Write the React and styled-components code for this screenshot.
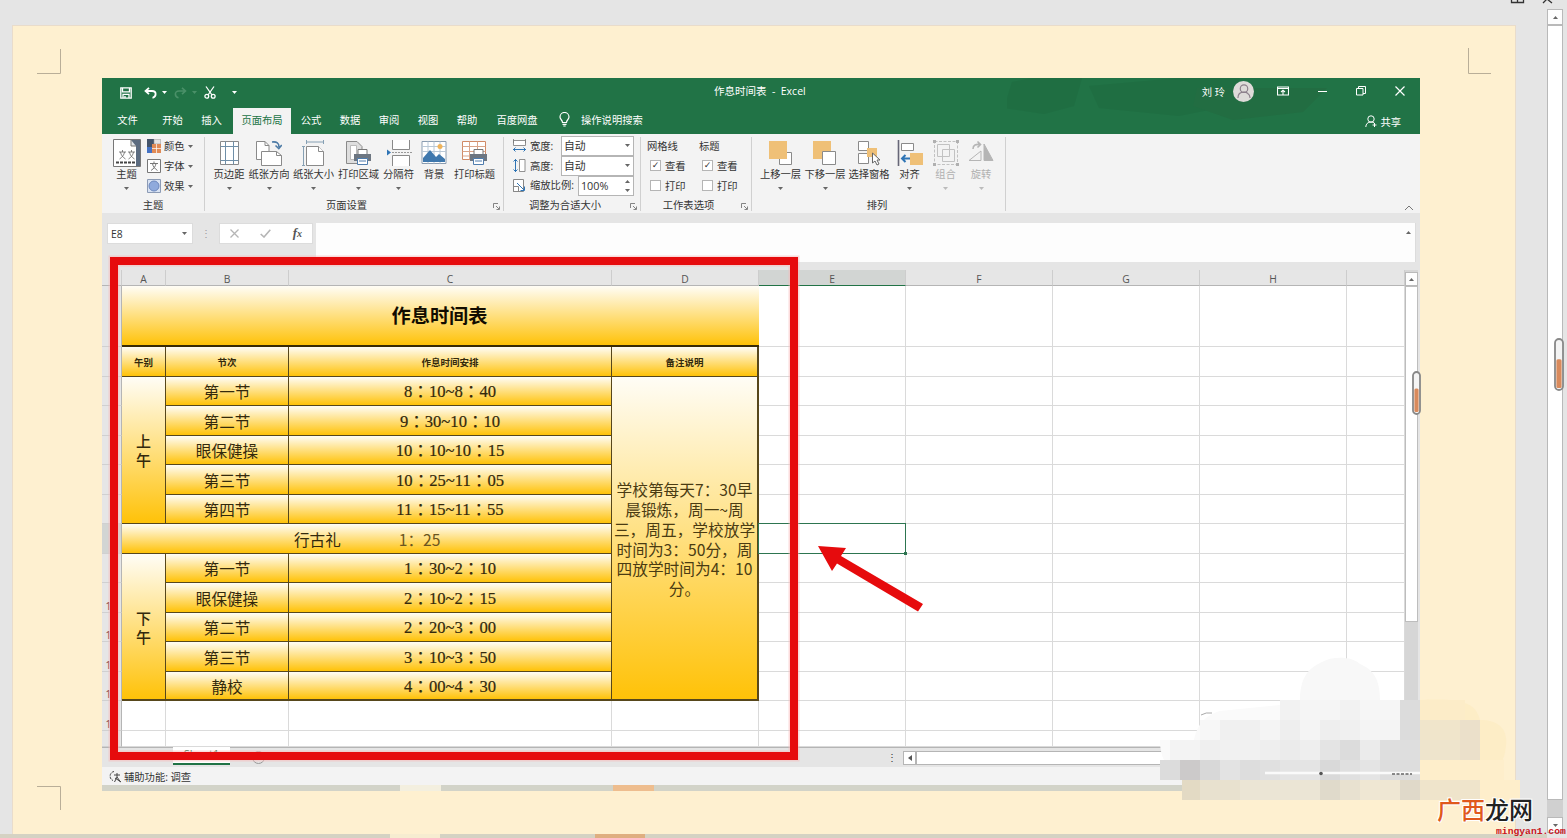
import React from 'react';
import styled, { createGlobalStyle, css } from 'styled-components';

const ui = "'Open Sans', 'Noto Sans CJK SC', sans-serif";
const cjk = "'Noto Sans CJK SC', sans-serif";
const green = '#217346';

const GlobalStyle = createGlobalStyle`
  * { box-sizing: border-box; }
  body { margin: 0; background: #e5e5e5; font-family: ${ui}; overflow: hidden; }
  svg { display: block; flex-shrink: 0; }
`;

/* ---------- icons ---------- */

const Caret = ({ color = '#666', up }) => (
  <svg width="5" height="3" viewBox="0 0 5 3">
    <path d={up ? 'M0 3h5L2.5 0z' : 'M0 0h5L2.5 3z'} fill={color} />
  </svg>
);

const Launcher = () => (
  <svg width="7" height="7" viewBox="0 0 7 7" fill="none" stroke="#777">
    <path d="M.5 5V.5H5M3 3l3 3M6.5 3.5v3h-3" strokeWidth=".9" />
  </svg>
);

const SaveIcon = () => (
  <svg width="12" height="12" viewBox="0 0 12 12" fill="none" stroke="#fff" strokeWidth="1.3">
    <path d="M.8.8h10.4v10.4H.8zM2.5 1v3.8h7V1M3 11V7.3h6V11M5 9v2" />
  </svg>
);

const UndoIcon = () => (
  <svg width="13" height="12" viewBox="0 0 13 12" fill="none" stroke="#fff" strokeWidth="1.8">
    <path d="M5 .8 1.5 4 5 7.2M1.8 4H8c5 0 4.5 6 .5 6.8" />
  </svg>
);

const RedoIcon = () => (
  <svg width="13" height="12" viewBox="0 0 13 12" fill="none" stroke="#4a9068" strokeWidth="1.6">
    <path d="M8 .8 11.5 4 8 7.2M11.2 4H5C0 4 .5 10 4.5 10.8" />
  </svg>
);

const CutIcon = () => (
  <svg width="12" height="13" viewBox="0 0 12 13" fill="none" stroke="#fff" strokeWidth="1.3">
    <path d="M2 .5 8 9M10 .5 4 9" />
    <circle cx="2.8" cy="10.2" r="1.9" />
    <circle cx="9.2" cy="10.2" r="1.9" />
  </svg>
);

const BulbIcon = () => (
  <svg width="11" height="15" viewBox="0 0 11 15" fill="none" stroke="#fff" strokeWidth="1.2">
    <path d="M3.5 10.5C3.5 8 1 7.500 1 5a4.500 4.500 0 0 1 9 0c0 2.500-2.500 3-2.500 5.500zM3.500 12.300h4M4.300 14h2.400" />
  </svg>
);

const PersonIcon = ({ size = 12, color = '#fff', plus }) => (
  <svg width={size} height={size} viewBox="0 0 12 12" fill="none" stroke={color}>
    <circle cx="6" cy="4" r="3.200" />
    <path d="M.8 12c0-3 2-5 5.200-5 1.500 0 2.500.4 3.300 1.100" />
    {plus ? <path d="M9.500 8v4M7.500 10h4" /> : <path d="M9 8c1.500 1 2.200 2.300 2.200 4" />}
  </svg>
);

const RibbonOptionsIcon = () => (
  <svg width="12" height="10" viewBox="0 0 12 10" fill="none" stroke="#fff" strokeWidth="1.1">
    <path d="M.5 1h11v8H.5zM.5 2.500h11M6 8.500V4.500M4 6l2-1.800L8 6" />
  </svg>
);

const RestoreIcon = () => (
  <svg width="10" height="10" viewBox="0 0 10 10" fill="none" stroke="#fff">
    <path d="M.5 2.500h6.500v6.500H.5zM2.500 2.500v-2h7v7H7" />
  </svg>
);

const CloseIcon = () => (
  <svg width="10" height="10" viewBox="0 0 10 10" stroke="#fff" strokeWidth="1.200">
    <path d="M.5.5l9 9M9.500.5l-9 9" />
  </svg>
);

const ThemeIcon = () => (
  <svg width="28" height="28" viewBox="0 0 28 28" fill="none">
    <path d="M.5.500h27v27H.5z" fill="#fff" stroke="#777" />
    <path d="M23 1h4v26h-4V7z" fill="#5b6b80" />
    <path d="M18 1v6h5l4-6z" fill="#5b6b80" />
    <path d="M18 1v6h5" fill="#dfe3e8" stroke="#777" />
    <g stroke="#666" strokeWidth=".8">
      <path d="M6 13h7M9.500 11v2M6.500 20c3-2 4.500-4 5-7M12.500 20c-3-2-4.500-4-5-7" />
      <path d="M15 13h7M18.500 11v2M15.500 20c3-2 4.500-4 5-7M21.500 20c-3-2-4.500-4-5-7" />
    </g>
    <path d="M3 23.500h19" stroke="#444" strokeWidth="2" strokeDasharray="3 1" />
  </svg>
);

const ColorsIcon = () => (
  <svg width="14" height="14" viewBox="0 0 14 14">
    <path fill="#44546a" d="M0 0h7v8H0z" />
    <path fill="#e4e4e4" stroke="#999" strokeWidth=".6" d="M7 .3h6.700V5H7z" />
    <path fill="#4472c4" d="M0 8h5v6H0z" />
    <path fill="#e08a55" d="M5 5h9v9H5z" />
    <path stroke="#fff" strokeWidth=".7" d="M9.500 5v9M5 9.500h9" />
  </svg>
);

const FontsIcon = () => (
  <svg width="14" height="14" viewBox="0 0 14 14" fill="none" stroke="#777">
    <path d="M.5.500h13v13H.5z" fill="#fff" />
    <path d="M3 4.500h8M7 2.500v2M4 11.500c3-2 4.500-4 5-7M10.500 11.500c-3-2-4.500-4-5-7" />
  </svg>
);

const EffectsIcon = () => (
  <svg width="14" height="14" viewBox="0 0 14 14">
    <path d="M.5.500h13v13H.5z" fill="#d9e3f3" stroke="#8c9bb5" />
    <circle cx="7" cy="7" r="5" fill="#8faadc" stroke="#6d88bd" />
  </svg>
);

const line = { fill: '#fff', stroke: '#8a8a8a' };

const MarginsIcon = () => (
  <svg width="24" height="26" viewBox="0 0 24 26" {...line}>
    <path d="M3.500 1.500h18v23h-18z" />
    <path d="M8.500 1.500v23M16.500 1.500v23M3.500 6.500h18M3.500 20.500h18" stroke="#6f8fa8" fill="none" />
  </svg>
);

const OrientationIcon = () => (
  <svg width="26" height="26" viewBox="0 0 26 26" {...line}>
    <path d="M.5 1.500H9l4 4v14H.5z" />
    <path d="M5.500 11.500h15l5 4v10h-20z" />
    <path d="M20.500 11.500v4h5M9 1.500v4h4" fill="none" />
    <path d="M16 2c5-.5 7 1 7 5M19.500 5.500l3.300 3 3-3.500" fill="none" stroke="#4c7aa5" strokeWidth="1.600" />
  </svg>
);

const SizeIcon = () => (
  <svg width="24" height="26" viewBox="0 0 24 26" {...line}>
    <path d="M4.500 6.500h12l5 5v14h-17z" />
    <path d="M16.500 6.500v5h5" />
    <path d="M4.500 0v4M21.500 0v4M5 2h16M1.500 6.500v19M0 6.500h3M0 25.500h3" stroke="#86a0b4" fill="none" />
  </svg>
);

const Printer = ({ x, y }) => (
  <g transform={`translate(${x} ${y})`}>
    <path d="M4 .500h9v5H4z" fill="#fff" stroke="#777" />
    <path d="M0 5h17v7H0z" fill="#6d7681" />
    <path d="M3.500 9.500h10v6h-10z" fill="#fff" stroke="#4f7dae" />
    <path d="M5 12h7" stroke="#4f7dae" />
  </g>
);

const PrintAreaIcon = () => (
  <svg width="26" height="26" viewBox="0 0 26 26">
    <path d="M.5 1.500H11l5 5v17H.5z" fill="#dedede" stroke="#8a8a8a" />
    <path d="M4.500 5.500h6v14h-6z" fill="#fff" stroke="#bbb" />
    <Printer x={8} y={9} />
  </svg>
);

const BreaksIcon = () => (
  <svg width="26" height="26" viewBox="0 0 26 26" {...line}>
    <path d="M6.500 0v9.500h17V0M6.500 26V15.500h17V26" />
    <path d="M6 12.500h20" stroke="#999" strokeDasharray="2 1" />
    <path d="M1 9.500l4 3-4 3z" fill="#2e74b5" stroke="none" />
  </svg>
);

const BackgroundIcon = () => (
  <svg width="26" height="26" viewBox="0 0 26 26">
    <path d="M1 1.500h24v22H1z" fill="#fff" stroke="#8a9cb0" />
    <path d="M1 6.500h24M1 11.500h24M7 1.500v22M13 1.500v22M19 1.500v22" stroke="#b9c8d6" />
    <circle cx="19" cy="6.500" r="2.500" fill="#f0b45a" />
    <path d="M2 22v-4l7-8 6 7 3-3 6 5v3z" fill="#3f78ad" />
  </svg>
);

const PrintTitlesIcon = () => (
  <svg width="26" height="26" viewBox="0 0 26 26">
    <path d="M.5 1.500h23v18H.5z" fill="#fff" stroke="#d08a66" />
    <path d="M.5 6.500h23M.5 11.500h23M.5 16h23M7.500 1.500v18M15.500 1.500v18" stroke="#d9a58a" />
    <Printer x={8} y={9} />
  </svg>
);

const ForwardIcon = () => (
  <svg width="24" height="26" viewBox="0 0 24 26">
    <path d="M10.500 12.500h12v12h-12z" {...line} />
    <path d="M0 1h18v18H0z" fill="#efc077" />
  </svg>
);

const BackwardIcon = () => (
  <svg width="24" height="26" viewBox="0 0 24 26">
    <path d="M0 1h18v18H0z" fill="#efc077" />
    <path d="M9.500 11.500h13v13h-13z" {...line} />
  </svg>
);

const SelectionIcon = () => (
  <svg width="24" height="26" viewBox="0 0 24 26" {...line}>
    <path d="M1.500 1.500h10v9h-10zM1.500 13.500h10v10h-10z" />
    <path d="M10 8h10v9H10z" fill="#efc077" stroke="none" />
    <path d="M15.500 13v10l2.500-2 2 4 2-1-2-4h3z" stroke="#666" />
  </svg>
);

const AlignIcon = () => (
  <svg width="26" height="26" viewBox="0 0 26 26">
    <path d="M1.500 0v26" stroke="#667" strokeWidth="1.600" />
    <path d="M4.500 3.500h12v7h-12z" {...line} />
    <path d="M13 13h13v12H13z" fill="#efc077" />
    <path d="M13 18.500H5M8.500 15 5 18.500 8.500 22" fill="none" stroke="#2e74b5" strokeWidth="2" />
  </svg>
);

const GroupIcon = () => (
  <svg width="26" height="26" viewBox="0 0 26 26" fill="none" stroke="#c2c2c2">
    <path d="M1.500 1.500h23v23h-23z" strokeDasharray="3 1.500" />
    <path d="M4.500 4.500h12v12h-12zM9.500 9.500h12v12h-12z" />
    <path d="M0 0h3v3H0zM23 0h3v3h-3zM0 23h3v3H0zM23 23h3v3h-3z" fill="#b0b0b0" stroke="none" />
  </svg>
);

const RotateIcon = () => (
  <svg width="26" height="26" viewBox="0 0 26 26" fill="none" stroke="#b5b5b5">
    <path d="M1 20.500h12V11z" />
    <path d="M16 20.500V4l9 16.500z" fill="#b5b5b5" />
    <path d="M5 9c0-4 3-5 7-4.500M9.500 1.500l3 3-3 3" strokeWidth="1.600" />
  </svg>
);

const WidthIcon = () => (
  <svg width="13" height="13" viewBox="0 0 13 13" fill="none" stroke="#777">
    <path d="M.5 0v4M12.500 0v4M.5 6.500h12v-5H.5z" strokeWidth=".8" fill="#fff" />
    <path d="M0 10.500h13M2.500 8.500l-2 2 2 2M10.500 8.500l2 2-2 2" stroke="#2e74b5" />
  </svg>
);

const HeightIcon = () => (
  <svg width="13" height="13" viewBox="0 0 13 13" fill="none" stroke="#777">
    <path d="M6.500.500h5.500v12H6.500z" strokeWidth=".8" fill="#fff" />
    <path d="M2.500 0v13M.5 2.500l2-2 2 2M.5 10.500l2 2 2-2" stroke="#2e74b5" />
  </svg>
);

const ScaleIcon = () => (
  <svg width="13" height="13" viewBox="0 0 13 13" fill="none" stroke="#888">
    <path d="M.5.500h10v12H.5z" fill="#fff" />
    <path d="M.5 7.500h5v5h-5z" />
    <path d="M4 4l7 7M11.500 7.500v4h-4" stroke="#2e74b5" />
  </svg>
);

const AccessIcon = () => (
  <svg width="13" height="13" viewBox="0 0 13 13" fill="none" stroke="#444">
    <path d="M5 1.500C0 2.500 0 9 4 10.500" strokeDasharray="2.500 1" />
    <path d="M5 5h6M8 3v4M8 7l-2.500 5M8 7l3.500 5M6 8l6 4" />
  </svg>
);

const Thermometer = ({ w, h }) => (
  <svg width={w} height={h} viewBox={`0 0 ${w} ${h}`}>
    <rect x="1" y="1" width={w - 2} height={h - 2} rx={w / 2 - 1} fill="#f4f4f4" stroke="#888" strokeWidth="1.800" />
    <rect x="2.400" y={h * 0.4} width={w - 4.800} height={h * 0.6 - 3} rx="1.500" fill="#d98a5c" />
  </svg>
);

/* ---------- content ---------- */

const tabs = [
  { name: '文件', w: 43 },
  { name: '开始', w: 47 },
  { name: '插入', w: 31 },
  { name: '页面布局', w: 58, active: true },
  { name: '公式', w: 40 },
  { name: '数据', w: 38 },
  { name: '审阅', w: 40 },
  { name: '视图', w: 38 },
  { name: '帮助', w: 40 },
  { name: '百度网盘', w: 60 },
];

const pageSetup = [
  { label: '页边距', w: 36, icon: MarginsIcon, menu: true },
  { label: '纸张方向', w: 44, icon: OrientationIcon, menu: true },
  { label: '纸张大小', w: 45, icon: SizeIcon, menu: true },
  { label: '打印区域', w: 45, icon: PrintAreaIcon, menu: true },
  { label: '分隔符', w: 35, icon: BreaksIcon, menu: true },
  { label: '背景', w: 36, icon: BackgroundIcon },
  { label: '打印标题', w: 45, icon: PrintTitlesIcon },
];

const arrange = [
  { label: '上移一层', w: 45, icon: ForwardIcon, menu: true },
  { label: '下移一层', w: 44, icon: BackwardIcon, menu: true },
  { label: '选择窗格', w: 44, icon: SelectionIcon },
  { label: '对齐', w: 37, icon: AlignIcon, menu: true },
  { label: '组合', w: 35, icon: GroupIcon, menu: true, off: true },
  { label: '旋转', w: 36, icon: RotateIcon, menu: true, off: true },
];

const columns = ['A', 'B', 'C', 'D', 'E', 'F', 'G', 'H', ''];

const lessons = [
  { row: 4, name: '第一节', time: '8：10~8：40' },
  { row: 5, name: '第二节', time: '9：30~10：10' },
  { row: 6, name: '眼保健操', time: '10：10~10：15' },
  { row: 7, name: '第三节', time: '10：25~11：05' },
  { row: 8, name: '第四节', time: '11：15~11：55' },
  { row: 10, name: '第一节', time: '1：30~2：10' },
  { row: 11, name: '眼保健操', time: '2：10~2：15' },
  { row: 12, name: '第二节', time: '2：20~3：00' },
  { row: 13, name: '第三节', time: '3：10~3：50' },
  { row: 14, name: '静校', time: '4：00~4：30' },
];

const notes = [
  '学校第每天7：30早',
  '晨锻炼，周一~周',
  '三，周五，学校放学',
  '时间为3：50分，周',
  '四放学时间为4：10',
  '分。',
];

// y, then [x, width, colour] for each block
const mosaic = [
  [700, [[1280, 20, '#f2f2f2'], [1300, 40, '#f5f5f5'], [1340, 20, '#f2f2f2'], [1360, 40, '#f6f6f6'], [1400, 20, '#dcdcdc'], [1420, 45, '#fcecc8']]],
  [720, [[1200, 20, '#f7f7f7'], [1220, 40, '#f0f0f0'], [1260, 20, '#f4f4f4'], [1280, 20, '#eeeeee'], [1300, 20, '#f4f4f4'], [1320, 20, '#eeeeee'], [1340, 20, '#f0f0f0'], [1360, 40, '#f4f4f4'], [1400, 20, '#dcdcdc'], [1420, 40, '#f0e5cb'], [1460, 20, '#ebe0ca']]],
  [740, [[1170, 30, '#f3f3f3'], [1200, 20, '#efefef'], [1220, 40, '#f1f1f1'], [1260, 20, '#eeeeee'], [1280, 20, '#ebebeb'], [1300, 20, '#eeeeee'], [1320, 20, '#e4e4e4'], [1340, 20, '#dcdcdc'], [1360, 20, '#ebebeb'], [1380, 40, '#dedede'], [1420, 40, '#eee4cc'], [1460, 20, '#ebe0ca']]],
  [760, [[1160, 20, '#dcdcdc'], [1180, 20, '#cccaca'], [1200, 20, '#d8d8d8'], [1220, 20, '#e3e3e3'], [1240, 20, '#dddddd'], [1260, 20, '#e0e0e0'], [1280, 40, '#e4e4e4'], [1320, 20, '#d9d9d9'], [1340, 20, '#e0e0e0'], [1360, 20, '#e4e4e4'], [1380, 40, '#dddddd'], [1420, 84, '#feeecb']]],
  [780, [[1182, 18, '#e3dac4'], [1200, 40, '#e8e1cf'], [1240, 80, '#ebe5d5'], [1320, 20, '#e0dacb'], [1340, 20, '#e8e1d0'], [1360, 40, '#efe7d3'], [1400, 20, '#e0d9c9'], [1420, 60, '#efe4cb'], [1480, 40, '#feeecb']]],
];

/* ---------- pieces ---------- */

const RibbonButton = ({ item }) => {
  const Icon = item.icon;
  return (
    <BigButton $w={item.w} $off={item.off}>
      <IconSlot>
        <Icon />
      </IconSlot>
      <span>{item.label}</span>
      {item.menu && <Caret color={item.off ? '#bbb' : '#666'} />}
    </BigButton>
  );
};

const renderTitleBar = () => (
  <TitleBar>
    <TitlePattern viewBox="0 0 330 56">
      <path d="M5 4 25 0h50l-8 28-30 8-40-6zM82 8l90-8h60l10 24-70 14-80-8z" fill="#1f6a40" />
      <path d="M190 10h130l-24 24-70 8-40-14z" fill="#23683f" />
    </TitlePattern>
    <QuickAccess>
      <SaveIcon />
      <UndoIcon />
      <Caret color="#fff" />
      <RedoIcon />
      <Caret color="#4a9068" />
      <CutIcon />
      <Caret color="#fff" />
    </QuickAccess>
    <DocName>作息时间表&nbsp; - &nbsp;Excel</DocName>
    <User>
      刘 玲
      <Avatar>
        <PersonIcon size={14} color="#8c7f8b" />
      </Avatar>
    </User>
    <WindowButtons>
      <RibbonOptionsIcon />
      <MinimizeMark />
      <RestoreIcon />
      <CloseIcon />
    </WindowButtons>
  </TitleBar>
);

const renderRibbon = () => (
  <Ribbon>
    <Group $w={103}>
      <Tools $pad={8}>
        <BigButton $w={33}>
          <IconSlot>
            <ThemeIcon />
          </IconSlot>
          <span>主题</span>
          <Caret />
        </BigButton>
        <Stack $ml={4} $up>
          <SmallButton><ColorsIcon />颜色<Caret /></SmallButton>
          <SmallButton><FontsIcon />字体<Caret /></SmallButton>
          <SmallButton><EffectsIcon />效果<Caret /></SmallButton>
        </Stack>
      </Tools>
      <GroupLabel>主题</GroupLabel>
    </Group>
    <Group $w={299}>
      <Tools $pad={6}>
        {pageSetup.map(item => <RibbonButton key={item.label} item={item} />)}
      </Tools>
      <GroupLabel $shift={-15}>页面设置<Corner><Launcher /></Corner></GroupLabel>
    </Group>
    <Group $w={137}>
      <Tools $pad={9}>
        <Stack $up>
          <Field><WidthIcon /><span>宽度:</span><Input $w={73}>自动<Caret /></Input></Field>
          <Field><HeightIcon /><span>高度:</span><Input $w={73}>自动<Caret /></Input></Field>
          <Field>
            <ScaleIcon />
            <span>缩放比例:</span>
            <Input $w={56}>
              100%
              <Spinner><Caret up /><Caret /></Spinner>
            </Input>
          </Field>
        </Stack>
      </Tools>
      <GroupLabel $shift={-14}>调整为合适大小<Corner><Launcher /></Corner></GroupLabel>
    </Group>
    <Group $w={111}>
      <Tools $pad={6}>
        <Stack $w={52} $up>
          <Field>网格线</Field>
          <Check><CheckBox>✓</CheckBox>查看</Check>
          <Check><CheckBox />打印</Check>
        </Stack>
        <Stack $w={50} $up>
          <Field>标题</Field>
          <Check><CheckBox>✓</CheckBox>查看</Check>
          <Check><CheckBox />打印</Check>
        </Stack>
      </Tools>
      <GroupLabel $shift={-15}>工作表选项<Corner><Launcher /></Corner></GroupLabel>
    </Group>
    <Group $w={254}>
      <Tools $pad={6}>
        {arrange.map(item => <RibbonButton key={item.label} item={item} />)}
      </Tools>
      <GroupLabel $shift={-3}>排列</GroupLabel>
    </Group>
    <Collapse>
      <svg width="10" height="6" viewBox="0 0 10 6" fill="none" stroke="#777">
        <path d="M1 5l4-4 4 4" />
      </svg>
    </Collapse>
  </Ribbon>
);

// the full-width colon sits a little lower than its own font puts it
const renderTime = time =>
  time.split('：').map((part, i) => (
    <React.Fragment key={i}>
      {i > 0 && <Colon>：</Colon>}
      {part}
    </React.Fragment>
  ));

const renderSheet = () => (
  <Sheet>
    <HeadCell $r={1} $c={1} />
    {columns.map((name, i) => (
      <HeadCell key={i} $r={1} $c={i + 2} $on={name === 'E'}>{name}</HeadCell>
    ))}
    {Array.from({ length: 15 }, (_, i) => (
      <RowHead key={i} $r={i + 2} $on={i === 7} $wide={i > 8}>{i < 14 ? i + 1 : ''}</RowHead>
    ))}
    {Array.from({ length: 15 }, (_, r) =>
      columns.map((name, c) =>
        c > 3 || r > 12 ? <Empty key={`${r}-${c}`} $r={r + 2} $c={c + 2} /> : null
      )
    )}
    <TitleCell>作息时间表</TitleCell>
    <HeaderCell $r={3} $c={2}>午别</HeaderCell>
    <HeaderCell $r={3} $c={3}>节次</HeaderCell>
    <HeaderCell $r={3} $c={4}>作息时间安排</HeaderCell>
    <HeaderCell $r={3} $c={5} $last>备注说明</HeaderCell>
    <HalfDay $from={4} $to={9}>上<br />午</HalfDay>
    <HalfDay $from={10} $to={15}>下<br />午</HalfDay>
    {lessons.map(l => (
      <React.Fragment key={l.row}>
        <NameCell $r={l.row} $c={3} $bottom={l.row === 14}>{l.name}</NameCell>
        <TimeCell $r={l.row} $c={4} $bottom={l.row === 14}>
          <div>{renderTime(l.time)}</div>
        </TimeCell>
      </React.Fragment>
    ))}
    <BreakCell>
      <span>行古礼</span>
      <em>1：25</em>
    </BreakCell>
    <NotesCell>
      {notes.map(text => <div key={text}>{text}</div>)}
    </NotesCell>
    <SelectedCell />
  </Sheet>
);

const App = () => (
  <Screen>
    <GlobalStyle />
    <Workspace>
      <Page>
        <Marks viewBox="0 0 1504 809">
          <path d="M25 48.500h23.500V24M1479 48.500h-22.500V23M25 761.500h23.500V785" />
        </Marks>
        <Window>
          {renderTitleBar()}
          <TabBar>
            {tabs.map(t => <Tab key={t.name} $w={t.w} $active={t.active}>{t.name}</Tab>)}
            <Tell><BulbIcon />操作说明搜索</Tell>
            <Share><PersonIcon plus />共享</Share>
          </TabBar>
          {renderRibbon()}
          <FormulaBar>
            <NameBox>E8<Caret /></NameBox>
            <Dots>⋮</Dots>
            <FormulaTools>
              <svg width="9" height="9" viewBox="0 0 9 9" stroke="#b5b5b5" strokeWidth="1.300"><path d="M.5.500l8 8M8.500.500l-8 8" /></svg>
              <svg width="11" height="9" viewBox="0 0 11 9" fill="none" stroke="#b5b5b5" strokeWidth="1.600"><path d="M.7 5l3.300 3L10.300.800" /></svg>
              <Fx>f<small>x</small></Fx>
            </FormulaTools>
            <FormulaInput><Caret up /></FormulaInput>
          </FormulaBar>
          <SheetArea>
            {renderSheet()}
            <InnerScroll>
              <ScrollButton $h={14}><Caret up /></ScrollButton>
              <InnerThumb />
            </InnerScroll>
          </SheetArea>
          <SheetTabs>
            <SheetTab>Sheet1</SheetTab>
            <NewSheet />
            <HDots>⋮</HDots>
            <HButton>
              <svg width="4" height="6" viewBox="0 0 4 6"><path d="M4 0v6L0 3z" fill="#555" /></svg>
            </HButton>
            <HTrack />
          </SheetTabs>
          <StatusBar><AccessIcon />辅助功能: 调查</StatusBar>
          <TaskStrip>
            <Segment $w={298} />
            <Segment $w={41} $color="#f3efdf" />
            <Segment $w={172} />
            <Segment $w={41} $color="#eebd8e" />
          </TaskStrip>
        </Window>
      </Page>
      <BottomStrip>
        <Segment $w={390} />
        <Segment $w={50} $color="#f6ecd0" />
        <Segment $w={155} />
        <Segment $w={50} $color="#dfae80" />
      </BottomStrip>
    </Workspace>
    <OuterScroll>
      <ScrollButton $h={16}><Caret up /></ScrollButton>
      <OuterThumb />
      <OuterGap />
      <ScrollButton $h={16}><Caret /></ScrollButton>
    </OuterScroll>
    <Overlay viewBox="0 0 1567 838">
      <path d="M1511.500 0v2.500h12V0M1517.500 0v2M1543 3l4-4 5 4" fill="none" stroke="#333" strokeWidth="1.300" />
      <path d="M1300 700c0-28 14-34 22-38 10-6 30-6 38 2 14 6 20 16 20 36z" fill="#f8f8f8" />
      <path d="M1194 740c4-20 16-26 26-29l60-6v-5h140v80h-230c-22-8-30-20-30-40z" fill="#fafafa" />
      <path d="M1420 700c40-2 56 2 60 20 20 0 28 10 26 26-2 20-12 30-26 34h-60z" fill="#fdedc6" />
      {mosaic.map(([y, blocks]) =>
        blocks.map(([x, w, fill]) => <rect key={`${x}-${y}`} x={x} y={y} width={w} height={20} fill={fill} />)
      )}
      <path d="M1265 773h155" stroke="#fafafa" strokeWidth="2.500" />
      <circle cx="1321" cy="773.500" r="1.800" fill="#555" />
      <path d="M1392 774h20" stroke="#666" strokeWidth="1.500" strokeDasharray="3 1.500" />
      <path d="M1201 715q5-3 11-2" stroke="#aaa" fill="none" />
      <rect x="114" y="261" width="680" height="495" fill="none" stroke="#f9b9b9" strokeOpacity=".5" strokeWidth="11" />
      <rect x="114" y="261" width="680" height="495" fill="none" stroke="#e60b0d" strokeWidth="8" />
      <path d="M818 546l28 2-5 8 82 48-5 7.500-81-48-5 7.500z" fill="#e60b0d" />
    </Overlay>
    <Pin $x={1412} $y={371}><Thermometer w={9} h={44} /></Pin>
    <Pin $x={1554} $y={338}><Thermometer w={10} h={53} /></Pin>
    <SiteLogo><b>广西</b>龙网</SiteLogo>
    <SiteUrl>mingyan1.com</SiteUrl>
  </Screen>
);

/* ---------- styles ---------- */

const Screen = styled.div`
  position: relative;
  display: flex;
  width: 1567px;
  height: 838px;
  overflow: hidden;
  background: #e5e5e5;
`;

const Workspace = styled.div`
  width: 1547px;
  padding-top: 25px;
`;

const Page = styled.div`
  position: relative;
  width: 1504px;
  height: 809px;
  margin-left: 12px;
  padding: 52px 0 0 89px;
  background: #fef0d0;
  border: 1px solid #e9dccb;
  border-bottom: 0;
`;

const Marks = styled.svg`
  position: absolute;
  top: -1px;
  left: -1px;
  width: 1504px;
  height: 809px;
  fill: none;
  stroke: #b9ae98;
`;

const BottomStrip = styled.div`
  display: flex;
  height: 4px;
  background: #d5d2c3;
`;

const Segment = styled.div`
  width: ${props => props.$w}px;
  background: ${props => props.$color || 'transparent'};
`;

const Window = styled.div`
  width: 1318px;
  height: 713px;
  background: #e5e5e5;
  font-size: 10.3px;
  color: #333;
`;

const TitleBar = styled.div`
  position: relative;
  display: flex;
  align-items: center;
  height: 29px;
  padding-right: 15px;
  background: ${green};
  color: #fff;
`;

const TitlePattern = styled.svg`
  position: absolute;
  left: 905px;
  top: 0;
  width: 330px;
  height: 56px;
  opacity: 0.5;
`;

const QuickAccess = styled.div`
  display: flex;
  align-items: center;
  width: 612px;
  padding-left: 18px;
  & > :nth-child(2) { margin-left: 12px; }
  & > :nth-child(3) { margin-left: 5px; }
  & > :nth-child(4) { margin-left: 7px; }
  & > :nth-child(5) { margin-left: 5px; }
  & > :nth-child(6) { margin-left: 7px; }
  & > :nth-child(7) { margin-left: 16px; }
`;

const DocName = styled.div`
  flex: 1;
  margin-top: -4px;
  white-space: nowrap;
  font-size: 10.5px;
`;

const User = styled.div`
  position: relative;
  display: flex;
  align-items: center;
  gap: 8px;
  margin-right: 23px;
  margin-top: -3px;
`;

const Avatar = styled.div`
  display: flex;
  align-items: center;
  justify-content: center;
  width: 21px;
  height: 21px;
  border-radius: 50%;
  background: #dedbd9;
`;

const WindowButtons = styled.div`
  position: relative;
  display: flex;
  align-items: center;
  justify-content: space-between;
  width: 128px;
  margin-top: -3px;
`;

const MinimizeMark = styled.div`
  width: 9px;
  height: 1px;
  background: #fff;
`;

const TabBar = styled.div`
  display: flex;
  height: 27px;
  padding-left: 4px;
  background: ${green};
  color: #fff;
`;

const Tab = styled.div`
  display: flex;
  align-items: center;
  justify-content: center;
  width: ${props => props.$w}px;
  margin-top: 1px;
  padding-bottom: 4px;
  ${props =>
    props.$active &&
    css`
      margin-left: 6px;
      background: #f3f3f3;
      color: ${green};
    `}
`;

const Tell = styled.div`
  position: relative;
  display: flex;
  align-items: center;
  gap: 11px;
  flex: 1;
  padding: 0 0 2px 12px;
`;

const Share = styled.div`
  position: relative;
  display: flex;
  align-items: center;
  gap: 3px;
  padding-right: 19px;
  padding-top: 1px;
`;

const Ribbon = styled.div`
  display: flex;
  height: 79px;
  padding-top: 3px;
  background: #f3f3f3;
`;

const Group = styled.div`
  width: ${props => props.$w}px;
  height: 74px;
  border-right: 1px solid #d0d0d0;
`;

const Tools = styled.div`
  display: flex;
  height: 59px;
  padding-left: ${props => props.$pad}px;
`;

const GroupLabel = styled.div`
  position: relative;
  height: 17px;
  line-height: 18px;
  text-align: center;
  padding-right: ${props => (props.$shift ? -props.$shift : 0)}px;
`;

const Corner = styled.div`
  position: absolute;
  right: 3px;
  top: 7px;
`;

const BigButton = styled.div`
  display: flex;
  flex-direction: column;
  align-items: center;
  width: ${props => props.$w}px;
  white-space: nowrap;
  color: ${props => (props.$off ? '#b0b0b0' : '#333')};
  span {
    height: 17px;
    line-height: 15px;
    margin-bottom: 3px;
  }
`;

const IconSlot = styled.div`
  display: flex;
  align-items: center;
  height: 30px;
  padding-top: 2px;
`;

const Stack = styled.div`
  width: ${props => (props.$w ? `${props.$w}px` : 'auto')};
  margin-left: ${props => props.$ml || 0}px;
  margin-top: ${props => (props.$up ? '-1px' : 0)};
`;

const SmallButton = styled.div`
  display: flex;
  align-items: center;
  gap: 3px;
  height: 20px;
  line-height: 18px;
`;

const Field = styled.div`
  display: flex;
  align-items: center;
  height: 19.8px;
  line-height: 18px;
  white-space: nowrap;
  svg + span {
    flex: 1;
    margin-left: 4px;
  }
`;

const Input = styled.div`
  display: flex;
  align-items: center;
  justify-content: space-between;
  width: ${props => props.$w}px;
  height: 20px;
  padding: 0 3px 0 2px;
  margin-left: 4px;
  background: #fff;
  border: 1px solid #b5b5b5;
  font-size: 10.8px;
`;

const Spinner = styled.div`
  display: flex;
  flex-direction: column;
  gap: 6px;
`;

const Check = styled.div`
  display: flex;
  align-items: center;
  gap: 4px;
  height: 19.8px;
  padding-left: 3px;
`;

const CheckBox = styled.div`
  width: 11px;
  height: 11px;
  border: 1px solid #b5b5b5;
  background: #fff;
  font: 9px/9px 'DejaVu Sans', sans-serif;
  text-align: center;
`;

const Collapse = styled.div`
  flex: 1;
  display: flex;
  align-items: flex-end;
  justify-content: flex-end;
  padding: 0 6px 2px 0;
`;

const FormulaBar = styled.div`
  display: flex;
  height: 57px;
  padding: 10px 4px 8px 5px;
`;

const NameBox = styled.div`
  display: flex;
  align-items: center;
  justify-content: space-between;
  width: 86px;
  height: 21px;
  padding: 0 5px 0 3px;
  background: #fff;
  border: 1px solid #dcdcdc;
`;

const Dots = styled.div`
  width: 26px;
  line-height: 20px;
  text-align: center;
  color: #999;
`;

const FormulaTools = styled.div`
  display: flex;
  align-items: center;
  justify-content: space-between;
  width: 94px;
  height: 21px;
  padding: 0 10px;
  margin-right: 3px;
  background: #fff;
  border: 1px solid #dcdcdc;
`;

const Fx = styled.i`
  font: italic bold 13px/16px 'Liberation Serif', serif;
  color: #555;
  small { font-size: 10px; }
`;

const FormulaInput = styled.div`
  display: flex;
  justify-content: flex-end;
  flex: 1;
  padding: 8px 4px;
  background: #fdfdfd;
  border-right: 1px solid #dcdcdc;
`;

const SheetArea = styled.div`
  display: flex;
  height: 477px;
`;

const Sheet = styled.div`
  display: grid;
  width: 1303px;
  height: 477px;
  grid-template-columns: 20px 44px 123px 323px 147px 147px 147px 147px 147px 58px;
  grid-template-rows: 16px 61px 30px 29px 30px 29px 30px 29px 30px 29px 30px 29px 30px 29px 30px 16px;
`;

const place = css`
  grid-row: ${props => props.$r};
  grid-column: ${props => props.$c};
`;

const HeadCell = styled.div`
  ${place}
  border-right: 1px solid #cdcdcd;
  border-bottom: 1px solid ${props => (props.$on ? green : '#b5b5b5')};
  background: ${props => (props.$on ? '#d2d5d3' : '#e6e6e6')};
  line-height: 18px;
  text-align: center;
  color: #555;
`;

const RowHead = styled.div`
  grid-row: ${props => props.$r};
  grid-column: 1;
  display: flex;
  align-items: flex-end;
  justify-content: center;
  padding-left: ${props => (props.$wide ? 0 : 4)}px;
  border-right: 1px solid #b5b5b5;
  border-bottom: 1px solid #d0d0d0;
  background: ${props => (props.$on ? '#d2d5d3' : '#e6e6e6')};
  line-height: 12px;
  color: #7a2c2c;
`;

const Empty = styled.div`
  ${place}
  background: #fff;
  border-right: 1px solid #dadada;
  border-bottom: 1px solid #dadada;
`;

const gold = css`
  display: flex;
  align-items: center;
  justify-content: center;
  background: linear-gradient(#fffdf6, #ffc208);
  border-right: 1px solid #57471b;
  border-bottom: ${props => (props.$bottom ? '2px' : '1px')} solid #57471b;
  color: #33290c;
  font-family: ${cjk};
`;

const TitleCell = styled.div`
  ${gold}
  grid-row: 2;
  grid-column: 2 / 6;
  padding: 0 2px 2px 0;
  border-right: 0;
  border-bottom: 2px solid #3a2c05;
  color: #120c00;
  font-size: 19.2px;
  font-weight: 700;
`;

const HeaderCell = styled.div`
  ${gold}
  ${place}
  border-right-width: ${props => (props.$last ? '2px' : '1px')};
  font-size: 9.5px;
  font-weight: 700;
`;

const HalfDay = styled.div`
  ${gold}
  grid-row: ${props => props.$from} / ${props => props.$to};
  grid-column: 2;
  border-bottom-width: ${props => (props.$to === 15 ? '2px' : '1px')};
  font-size: 15px;
  font-weight: 500;
  line-height: 19px;
`;

const NameCell = styled.div`
  ${gold}
  ${place}
  font-size: 15.6px;
`;

const TimeCell = styled.div`
  ${gold}
  ${place}
  padding-top: 2px;
  font: 16.6px/20px 'Liberation Serif', 'Noto Sans CJK TC', serif;
  -webkit-text-stroke: 0.2px #33290c;
`;

const Colon = styled.span`
  vertical-align: -1px;
  line-height: 1;
`;

const BreakCell = styled.div`
  ${gold}
  grid-row: 9;
  grid-column: 2 / 5;
  justify-content: flex-start;
  padding-left: 172px;
  font-size: 15.6px;
  em {
    margin-left: 58px;
    font-style: normal;
    color: #6b5620;
  }
`;

const NotesCell = styled.div`
  ${gold}
  grid-row: 4 / 15;
  grid-column: 5;
  flex-direction: column;
  padding-top: 3px;
  border-right-width: 2px;
  border-bottom-width: 2px;
  font-size: 15.7px;
  line-height: 19.9px;
  white-space: nowrap;
  color: #4a3b12;
`;

const SelectedCell = styled.div`
  position: relative;
  grid-row: 9;
  grid-column: 6;
  margin: -1px 0 0 -1px;
  border: 1.5px solid #2d7550;
  &::after {
    content: '';
    position: absolute;
    right: -2px;
    bottom: -2px;
    width: 3px;
    height: 3px;
    background: #2d7550;
  }
`;

const InnerScroll = styled.div`
  width: 13px;
  padding-top: 2px;
  background: #d6d6d6;
`;

const ScrollButton = styled.div`
  display: flex;
  align-items: center;
  justify-content: center;
  height: ${props => props.$h}px;
  background: #fdfdfd;
  border: 1px solid #b9b9b9;
`;

const InnerThumb = styled.div`
  height: 336px;
  background: #fff;
  border: 1px solid #bdbdbd;
`;

const SheetTabs = styled.div`
  display: flex;
  height: 20px;
  border-top: 1px solid #b5b5b5;
  padding-left: 71px;
`;

const SheetTab = styled.div`
  width: 57px;
  height: 18px;
  margin-top: -1px;
  background: #fff;
  border-bottom: 2px solid ${green};
  text-align: center;
  font-size: 11px;
  line-height: 14px;
  color: ${green};
`;

const NewSheet = styled.div`
  width: 13px;
  height: 13px;
  margin: 3px 0 0 22px;
  border: 1px solid #999;
  border-radius: 50%;
`;

const HDots = styled.div`
  margin-left: 622px;
  width: 10px;
  text-align: center;
  line-height: 19px;
`;

const HButton = styled.div`
  display: flex;
  align-items: center;
  justify-content: center;
  width: 13px;
  height: 14px;
  margin: 3px 0 0 6px;
  background: #fff;
  border: 1px solid #b5b5b5;
`;

const HTrack = styled.div`
  flex: 1;
  height: 14px;
  margin: 3px 14px 0 0;
  background: #fff;
  border: 1px solid #b5b5b5;
`;

const StatusBar = styled.div`
  display: flex;
  align-items: center;
  gap: 2px;
  height: 18px;
  padding-left: 7px;
  background: #f3f3f3;
`;

const TaskStrip = styled.div`
  display: flex;
  height: 6px;
  background: #d2d3c8;
`;

const OuterScroll = styled.div`
  width: 16px;
  padding-top: 9px;
`;

const OuterThumb = styled.div`
  height: 775px;
  background: #fff;
  border: 1px solid #b9b9b9;
`;

const OuterGap = styled.div`
  height: 17px;
  background: #d0d0d0;
`;

const Overlay = styled.svg`
  position: absolute;
  inset: 0;
  width: 1567px;
  height: 838px;
`;

const Pin = styled.div`
  position: absolute;
  left: ${props => props.$x}px;
  top: ${props => props.$y}px;
`;

const SiteLogo = styled.div`
  position: absolute;
  left: 1437px;
  top: 792px;
  font: 500 24px/34px ${cjk};
  color: #222;
  white-space: nowrap;
  text-shadow: 1px 1px 0 #fff, -1px -1px 0 #fff, 1px -1px 0 #fff, -1px 1px 0 #fff;
  b {
    font-weight: 500;
    color: #e0591c;
  }
`;

const SiteUrl = styled.div`
  position: absolute;
  left: 1496px;
  top: 826px;
  font: bold 9.7px/12px 'Liberation Mono', monospace;
  color: #c8141b;
`;

export default App;
